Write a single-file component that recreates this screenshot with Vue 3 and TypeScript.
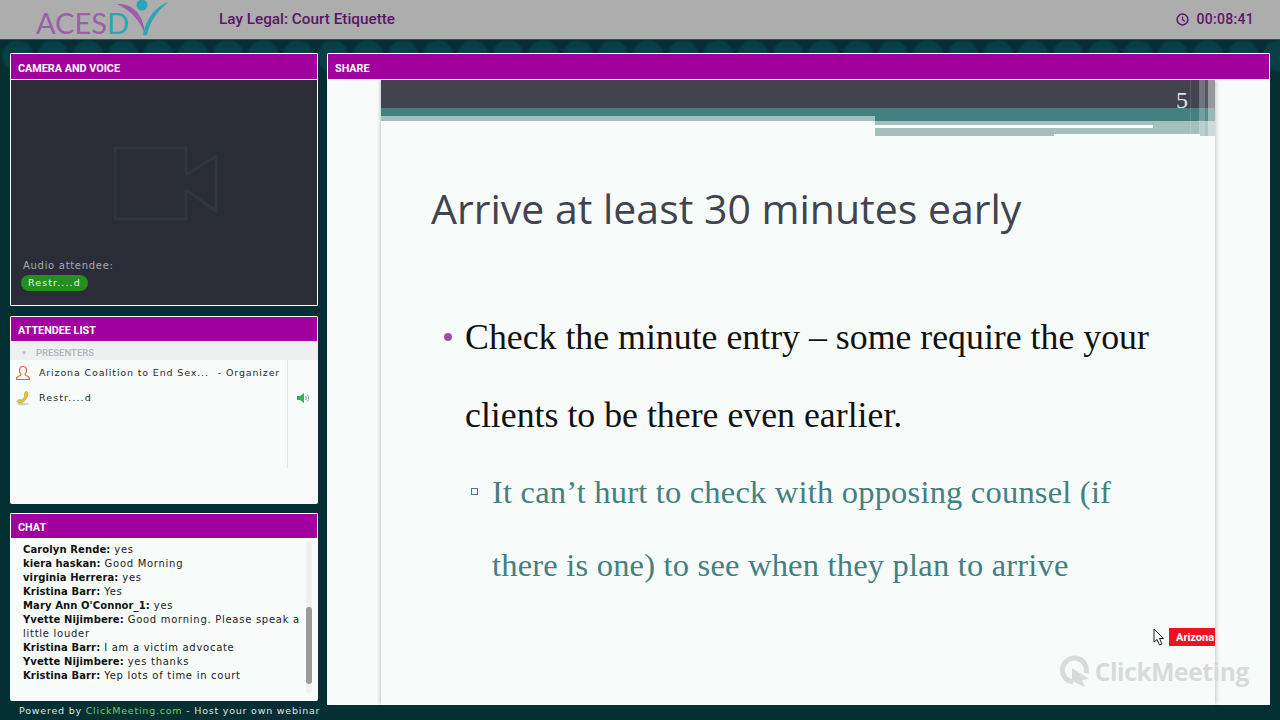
<template>
  <div class="page">
    <header class="topbar">
      <div class="logo">
        <span class="logo-text">ACES<span class="logo-d">D</span></span>
        <svg class="logo-mark" width="56" height="39" viewBox="0 0 56 39">
          <path d="M1 4C14 3 28 12 29 35C25 21 14 10 1 4Z" fill="#9a5fa8" />
          <path d="M27 35C30 18 40 6 53 2C44 8 34 20 31 35Z" fill="#2ba5b5" />
          <circle cx="26" cy="5" r="5.500" fill="#2ba5b5" />
        </svg>
      </div>
      <div class="title">Lay Legal: Court Etiquette</div>
      <div class="timer">
        <svg width="13" height="13" viewBox="0 0 13 13">
          <circle cx="6.500" cy="6.500" r="5.400" fill="none" stroke="#5a1668" stroke-width="1.500" />
          <path d="M6.500 3.400V6.800L9 8.200" fill="none" stroke="#5a1668" stroke-width="1.200" />
        </svg>
        <span>00:08:41</span>
      </div>
    </header>

    <main class="content">
      <div class="left">
        <section class="panel camera">
          <h2 class="panel-head">CAMERA AND VOICE</h2>
          <div class="camera-body">
            <svg class="cam-icon" width="106" height="76" viewBox="0 0 106 76">
              <path d="M73 29V2H2V73H73V44M73 29L103 10V65L73 44" fill="none" stroke="#31353f" stroke-width="3" />
            </svg>
            <div class="audio-label">Audio attendee:</div>
            <span class="pill">Restr....d</span>
          </div>
        </section>

        <section class="panel attendees">
          <h2 class="panel-head">ATTENDEE LIST</h2>
          <div class="group-head"><span class="caret">▼</span>PRESENTERS</div>
          <div class="people">
            <div class="person">
              <svg class="person-icon" width="16" height="16" viewBox="0 0 16 16">
                <path d="M8 1.500C5.500 1.500 4.500 3.500 4.500 5.500C4.500 7.500 5.500 8.500 6 9.500C6 10.500 4.500 11 3 11.500C2 12 1.500 13 1.500 14.500H14.500C14.500 13 14 12 13 11.500C11.500 11 10 10.500 10 9.500C10.500 8.500 11.500 7.500 11.500 5.500C11.500 3.500 10.500 1.500 8 1.500Z" fill="none" stroke="#d9693a" stroke-width="1.200" />
              </svg>
              <span>Arizona Coalition to End Sex...</span>
              <span class="role">- Organizer</span>
            </div>
            <div class="person">
              <svg class="person-icon" width="16" height="16" viewBox="0 0 16 16">
                <ellipse cx="8" cy="14" rx="6" ry="1.500" fill="#cfd3d2" />
                <path d="M11.500 1.500C14 2.500 13 6 11 9C9 12 5 14 3 12.500C2 11.500 2.500 10 4 9.500C5.500 10 7 10.500 8 9C9.500 7.500 10 5.500 9.500 4C9.500 2.500 10.500 1.500 11.500 1.500Z" fill="#e3c52f" stroke="#b79a1c" stroke-width=".6" />
              </svg>
              <span class="grow">Restr....d</span>
              <svg class="speaker" width="14" height="12" viewBox="0 0 14 12">
                <path d="M1 4H4L8 1V11L4 8H1Z" fill="#3dae58" />
                <path d="M9.500 4C10.500 5 10.500 7 9.500 8" fill="none" stroke="#3dae58" />
                <path d="M11.500 2.500C13 4.500 13 7.500 11.500 9.500" fill="none" stroke="#9aa5a2" />
              </svg>
            </div>
          </div>
        </section>

        <section class="panel chat">
          <h2 class="panel-head">CHAT</h2>
          <div class="chat-body">
            <p v-for="(msg, i) in messages" :key="i" class="msg"><b>{{ msg.name }}:</b> {{ msg.text }}</p>
            <div class="scroll-track"><div class="scroll-thumb"></div></div>
          </div>
        </section>

        <footer class="powered">Powered by <span class="green">ClickMeeting.com</span> - Host your own webinar</footer>
      </div>

      <section class="panel share">
        <h2 class="panel-head">SHARE</h2>
        <div class="share-body">
          <div class="slide">
            <div class="slide-band">
              <div class="band-dark"><span class="slide-num">5</span></div>
              <div class="band-teal"></div>
              <div class="band-light"></div>
              <div class="band-cover"></div>
              <div class="band-line"></div>
              <div class="band-notch"></div>
              <div class="band-stripes"></div>
            </div>
            <h1 class="slide-title">Arrive at least 30 minutes early</h1>
            <ul class="bullets">
              <li class="bullet">Check the minute entry – some require the your clients to be there even earlier.</li>
              <li class="sub">It can’t hurt to check with opposing counsel (if there is one) to see when they plan to arrive</li>
            </ul>
            <div class="tag">Arizona</div>
            <svg class="cursor" width="12" height="18" viewBox="0 0 12 18">
              <path d="M1 1V14L4 11.500L6.500 17L9 16L6.500 10.500H10.500Z" fill="#fff" stroke="#222" stroke-width="1" />
            </svg>
          </div>
          <div class="watermark">
            <svg width="32" height="33" viewBox="0 0 32 33">
              <path d="M14 27A12 12 0 1 1 27 18" fill="none" stroke="#d7dbd9" stroke-width="5" />
              <path d="M13 13L30 24L23 25L26 32L13 26Z" fill="#d7dbd9" />
            </svg>
            <span>ClickMeeting</span>
          </div>
        </div>
      </section>
    </main>
  </div>
</template>

<script setup lang="ts">
const messages = [
  { name: 'Carolyn Rende', text: 'yes' },
  { name: 'kiera haskan', text: 'Good Morning' },
  { name: 'virginia Herrera', text: 'yes' },
  { name: 'Kristina Barr', text: 'Yes' },
  { name: "Mary Ann O'Connor_1", text: 'yes' },
  { name: 'Yvette Nijimbere', text: 'Good morning. Please speak a little louder' },
  { name: 'Kristina Barr', text: 'I am a victim advocate' },
  { name: 'Yvette Nijimbere', text: 'yes thanks' },
  { name: 'Kristina Barr', text: 'Yep lots of time in court' },
]
</script>

<style>
html, body { margin: 0; background: #032e32; }
</style>

<style scoped>
.page {
  width: 1280px;
  height: 720px;
  overflow: hidden;
  display: flex;
  flex-direction: column;
  background-color: #042f33;
  background-image: radial-gradient(circle at 18px 56px, #063f45 0, #063f45 14px, transparent 17px);
  background-size: 35px 720px;
  background-repeat: repeat-x;
  font-family: "DejaVu Sans", sans-serif;
}
.topbar {
  height: 39px;
  flex-shrink: 0;
  display: flex;
  align-items: center;
  background: #adadad;
  border-bottom: 1px solid #0c5f63;
  color: #5a1668;
  font-family: Roboto, sans-serif;
  font-weight: 500;
}
.logo {
  width: 219px;
  height: 39px;
  flex-shrink: 0;
  display: flex;
  box-sizing: border-box;
  padding-left: 36px;
}
.logo-text {
  font-family: Lato, sans-serif;
  font-weight: 400;
  font-size: 29px;
  line-height: 45px;
  color: #9a5fa8;
  width: 80px;
  white-space: nowrap;
}
.logo-d { color: #2ba5b5; }
.title { font-size: 15.300px; flex: 1; margin-top: -1px; }
.timer {
  display: flex;
  align-items: center;
  gap: 7px;
  margin-right: 26px;
  font-size: 14px;
  letter-spacing: .3px;
  margin-top: -1px;
}
.content {
  flex: 1;
  min-height: 0;
  display: flex;
  gap: 9px;
  padding: 13px 10px 0;
}
.left {
  width: 308px;
  display: flex;
  flex-direction: column;
  gap: 9px;
}
.panel {
  display: flex;
  flex-direction: column;
  box-sizing: border-box;
  border-radius: 2px;
  background: #f7fbf9;
  overflow: hidden;
}
.panel-head {
  margin: 0;
  height: 26px;
  flex-shrink: 0;
  box-sizing: border-box;
  padding-left: 7px;
  background: #a1009f;
  border: 1px solid #fff;
  color: #fff;
  font-family: Roboto, sans-serif;
  font-size: 10.800px;
  font-weight: 700;
  line-height: 28px;
}
.camera .panel-head,
.share .panel-head {
  height: 27px;
  line-height: 30px;
}
.camera { height: 253px; margin-bottom: 1px; }
.camera-body {
  position: relative;
  flex: 1;
  background: #2a2d38;
  border: 1px solid #fff;
  border-top: 0;
  padding: 180px 0 0 12px;
  font-size: 10px;
  letter-spacing: .7px;
  color: #a7a9ad;
}
.cam-icon { position: absolute; left: 102px; top: 66px; }
.audio-label { line-height: 12px; }
.pill {
  display: inline-block;
  margin: 3px 0 0 -2px;
  height: 16px;
  line-height: 16px;
  padding: 0 7px;
  border-radius: 8px;
  background: #23901d;
  color: #eef;
  font-size: 9.500px;
  letter-spacing: 1.100px;
}
.attendees { height: 188px; }
.group-head {
  height: 18px;
  background: #edf0ef;
  font-family: Roboto, sans-serif;
  font-weight: 500;
  font-size: 9.500px;
  line-height: 21px;
  color: #b0b5c2;
  padding-left: 11px;
}
.caret { font-size: 6px; margin-right: 9px; vertical-align: 1px; }
.people {
  height: 108px;
  margin-right: 30px;
  border-right: 1px solid #e2e6e5;
  font-size: 9.500px;
  letter-spacing: .85px;
  color: #2a2a2a;
}
.person {
  height: 25px;
  display: flex;
  align-items: center;
  padding-left: 5px;
  white-space: nowrap;
  position: relative;
}
.person-icon { margin-right: 8px; flex-shrink: 0; }
.role { margin-left: 9px; }
.grow { flex: 1; letter-spacing: 1.100px; }
.speaker { position: absolute; right: -23px; top: 7px; }
.chat { height: 188px; }
.chat-body {
  position: relative;
  flex: 1;
  padding: 4px 14px 0 13px;
  font-size: 10px;
  letter-spacing: .72px;
  line-height: 14px;
  color: #222;
}
.msg { margin: 0; }
.msg b { letter-spacing: .1px; font-weight: 700; color: #111; }
.scroll-track {
  position: absolute;
  right: 6px;
  top: 3px;
  bottom: 8px;
  width: 6px;
  background: #eef1f0;
  border-radius: 3px;
}
.scroll-thumb {
  position: absolute;
  left: 0;
  right: 0;
  top: 65px;
  height: 77px;
  border-radius: 3px;
  background: #9a9c9c;
}
.powered {
  margin-top: -5px;
  padding-left: 9px;
  white-space: nowrap;
  font-size: 9.500px;
  letter-spacing: .78px;
  color: #dfe5e5;
}
.green { color: #6ccf52; }
.share {
  flex: 1;
  height: 652px;
  border-radius: 2px 2px 0 0;
}
.share-body {
  position: relative;
  flex: 1;
  min-height: 0;
  display: flex;
  justify-content: center;
  overflow: hidden;
}
.slide {
  position: relative;
  width: 834px;
  margin-right: 1px;
  box-sizing: border-box;
  background: #f7fbf9;
  box-shadow: -2px 0 3px -1px #c4c7c6, 3px 0 3px -1px #d2d5d4;
  overflow: hidden;
}
.slide-band { position: relative; height: 56px; }
.band-dark {
  height: 28px;
  background: #41444f;
  display: flex;
  justify-content: flex-end;
  padding-right: 27px;
}
.slide-num {
  font-family: "Liberation Serif", serif;
  font-size: 24px;
  line-height: 40px;
  color: #dfe3e4;
}
.band-teal { height: 13px; background: #43807f; }
.band-light { position: absolute; left: 0; right: 0; top: 41px; height: 15px; background: #a3c0bf; }
.band-cover {
  position: absolute;
  left: 0;
  top: 36px;
  width: 494px;
  height: 20px;
  background: linear-gradient(#a3c0bf 0 5px, #f7fbf9 5px);
}
.band-line { position: absolute; left: 494px; width: 278px; top: 45px; height: 3px; background: #f7fbf9; }
.band-notch { position: absolute; left: 673px; right: 15px; top: 54px; height: 2px; background: #f7fbf9; }
.band-stripes {
  position: absolute;
  right: 0;
  top: 0;
  width: 25px;
  height: 56px;
  background: linear-gradient(90deg,
    rgba(255, 255, 255, .12) 0 1px,
    transparent 1px 9px,
    rgba(255, 255, 255, .25) 9px 15px,
    rgba(255, 255, 255, .1) 15px 18px,
    rgba(255, 255, 255, .45) 18px 25px);
}
.slide-title {
  margin: 0;
  padding: 47px 0 0 50px;
  font-family: "Open Sans", sans-serif;
  font-weight: 400;
  font-size: 41px;
  line-height: 50px;
  color: #41444f;
  white-space: nowrap;
}
.bullets {
  list-style: none;
  margin: 65px 0 0;
  padding: 0 30px 0 84px;
  font-family: "Liberation Serif", serif;
}
.bullet {
  position: relative;
  font-size: 35.800px;
  line-height: 78px;
  color: #111;
}
.bullet::before {
  content: "";
  position: absolute;
  left: -21px;
  top: 35px;
  width: 8px;
  height: 8px;
  border-radius: 50%;
  background: #9a52a0;
}
.sub {
  position: relative;
  margin: 2px 60px 0 27px;
  font-size: 32.500px;
  letter-spacing: .2px;
  line-height: 73px;
  color: #43807f;
}
.sub::before {
  content: "";
  position: absolute;
  left: -21px;
  top: 32px;
  width: 5px;
  height: 5px;
  border: 1px solid #43807f;
}
.tag {
  position: absolute;
  left: 788px;
  top: 548px;
  height: 18px;
  width: 60px;
  background: #ee1122;
  color: #fff;
  font-family: Roboto, sans-serif;
  font-weight: 700;
  font-size: 11px;
  line-height: 19px;
  padding-left: 7px;
}
.cursor { position: absolute; left: 772px; top: 548px; }
.watermark {
  position: absolute;
  right: 21px;
  bottom: 17px;
  display: flex;
  align-items: center;
  gap: 4px;
  font-family: "Open Sans", sans-serif;
  font-weight: 700;
  font-size: 24.500px;
  letter-spacing: -.35px;
  color: #d7dbd9;
}
</style>
